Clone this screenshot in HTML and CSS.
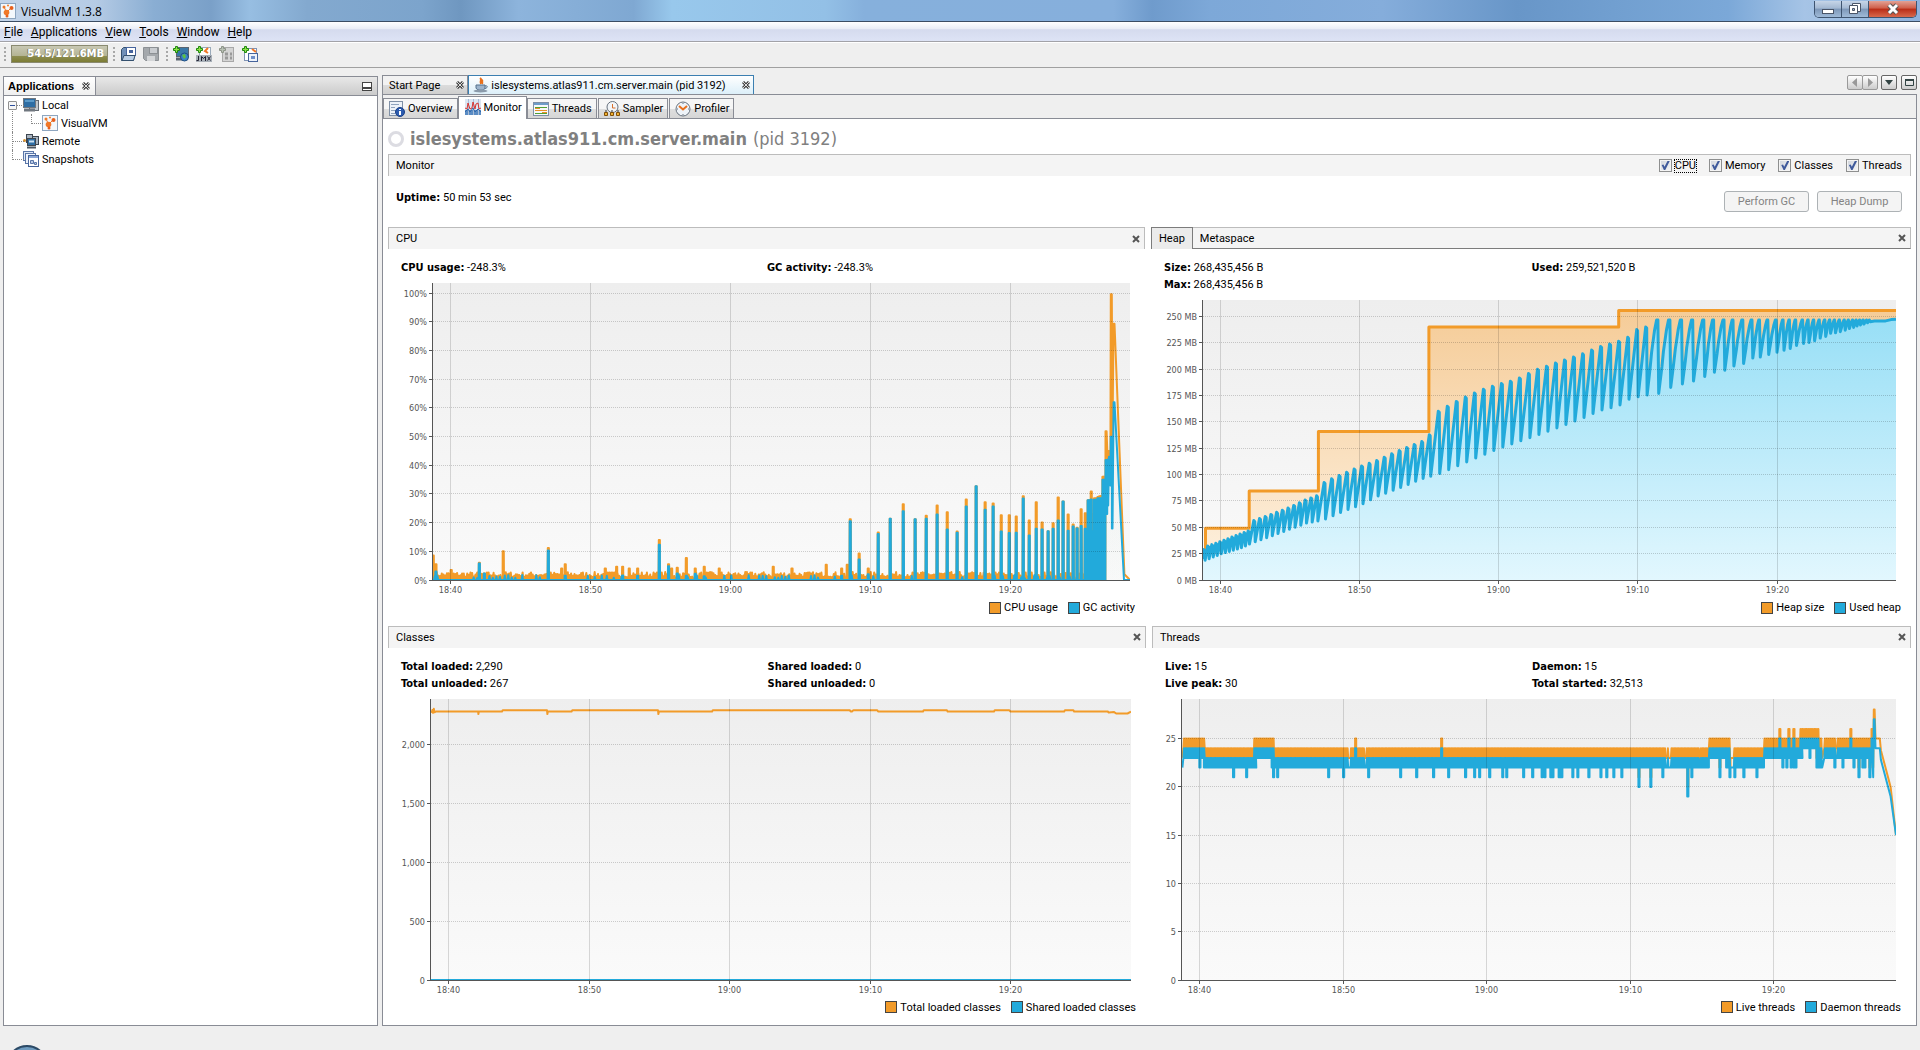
FILE: index.html
```html
<!DOCTYPE html>
<html lang="en">
<head>
    <meta charset="UTF-8">
    <meta name="viewport" content="width=device-width, initial-scale=1.0">
    <title>VisualVM 1.3.8</title>
    <link rel="stylesheet" href="styles.css">
</head>
<body>
<!-- shared icon shapes -->
<svg class="defs" width="0" height="0" aria-hidden="true">
    <symbol id="i-vm" viewBox="0 0 16 16">
        <rect x=".5" y=".5" width="15" height="15" fill="#f4f8fc" stroke="#8ea6c0"/>
        <path d="M4 4l2 4M7 9l4-4" stroke="#f07828"/>
        <circle cx="4" cy="4" r="1.500" fill="#f07828"/><circle cx="8" cy="2.500" r="1" fill="#f07828"/>
        <circle cx="11.500" cy="5" r="2" fill="#e8601c"/><circle cx="6.500" cy="9.500" r="2.800" fill="#f07828"/>
        <circle cx="7" cy="13" r="1.500" fill="#e8601c"/>
    </symbol>
    <symbol id="i-plus" viewBox="0 0 16 16">
        <path d="M2.500.500h2v2h2v2h-2v2h-2v-2h-2v-2h2z" fill="#8fe04a" stroke="#1f8a0c"/>
    </symbol>
    <symbol id="i-shot" viewBox="0 0 16 16">
        <rect x=".5" y=".5" width="10" height="9" fill="#dfe8f6" stroke="#5a76a8"/>
        <rect x="2.500" y="2.500" width="10" height="10" fill="#eef3fb" stroke="#5a76a8"/>
        <rect x="5.500" y="4.500" width="10" height="11" fill="#fff" stroke="#46649c"/>
        <path d="M6 6h9" stroke="#8ba6d6" stroke-width="2"/>
        <path d="M7.500 9.500h3v3h-3zM11.500 11.500h2v2h-2z" fill="#b8c8e4" stroke="#5a76a8"/>
    </symbol>
    <symbol id="i-x" viewBox="0 0 8 8"><path d="M1 1l6 6M7 1L1 7" stroke="#555" stroke-width="2"/></symbol>
    <symbol id="i-tabx" viewBox="0 0 8 8">
        <path d="M1 1l6 6M7 1L1 7" stroke="#444" stroke-width="3"/>
        <path d="M1 1l6 6M7 1L1 7" stroke="#ddd"/>
    </symbol>
</svg>

<div class="window">
    <header class="titlebar">
        <svg class="icon"><use href="#i-vm"/></svg>
        <span class="titlebar-text">VisualVM 1.3.8</span>
        <div class="window-buttons">
            <button aria-label="Minimize"><svg width="12" height="16"><rect x=".5" y="8.500" width="11" height="4" fill="#fff" stroke="#4a5568"/></svg></button>
            <button aria-label="Restore"><svg width="12" height="16"><path d="M3.500 2.500h8v8h-8z" fill="#fff" stroke="#4a5568"/><path d="M.5 4.500h8v8h-8z" fill="#fff" stroke="#4a5568"/><path d="M3.500 7.500h2v2h-2z" fill="#9fb4cf" stroke="#4a5568"/></svg></button>
            <button class="window-close" aria-label="Close"><svg width="12" height="16"><path d="M2 4l8 8M10 4l-8 8" stroke="#555" stroke-width="5"/><path d="M2 4l8 8M10 4l-8 8" stroke="#fff" stroke-width="3"/></svg></button>
        </div>
    </header>

    <nav class="menubar">
        <a href="#"><u>F</u>ile</a>
        <a href="#"><u>A</u>pplications</a>
        <a href="#"><u>V</u>iew</a>
        <a href="#"><u>T</u>ools</a>
        <a href="#"><u>W</u>indow</a>
        <a href="#"><u>H</u>elp</a>
    </nav>

    <div class="toolbar">
        <span class="grip"></span>
        <button class="memory">54.5/121.6MB</button>
        <span class="grip"></span>
        <button aria-label="Open file"><svg class="icon">
            <path d="M1.500 14.500v-11l2-2h4l1 2v5h6l-1 6z" fill="#6f8fb8" stroke="#34506e"/>
            <rect x="6.500" y="1.500" width="9" height="8" fill="#fff" stroke="#46649c"/><path d="M9 5.500h4" stroke="#46649c" stroke-width="3"/>
            <path d="M2 14.500l2-5h11l-1.500 5z" fill="#b9cde4" stroke="#34506e"/></svg></button>
        <button aria-label="Save" disabled><svg class="icon">
            <path d="M.500 1.500h15v13h-13l-2-2z" fill="#a4a8ac" stroke="#8c9094"/>
            <rect x="6.500" y="1.500" width="8" height="6" fill="#c9ccd0" stroke="#8c9094"/><rect x="4" y="10" width="8" height="5" fill="#d4d6d8"/></svg></button>
        <span class="grip"></span>
        <button aria-label="Add remote host"><svg class="icon">
            <rect x="3.500" y="1.500" width="12" height="9" fill="#3a78a8" stroke="#5a6470"/><path d="M3 13h7" stroke="#5a6470" stroke-width="3"/>
            <circle cx="11.500" cy="11" r="4" fill="#3a80c8" stroke="#1f4e80"/><path d="M9 9l3-1 1 3-2 2z" fill="#5cc040"/>
            <use href="#i-plus"/></svg></button>
        <button aria-label="Add JMX connection"><svg class="icon">
            <rect x="3.500" y="1.500" width="11" height="13" fill="#fff" stroke="#9ab"/>
            <path d="M12 2l-3 3 3 2" fill="none" stroke="#f07828" stroke-width="2"/>
            <rect y="9" width="16" height="7" fill="#a8b0b8"/><path d="M2.500 10v4.500h-2M5.500 15v-4.500l2 2 2-2V15M11.500 10.500l3 4M14.500 10.500l-3 4" fill="none" stroke="#223"/>
            <use href="#i-plus"/></svg></button>
        <button aria-label="Add VM coredump" disabled><svg class="icon">
            <rect x="3.500" y="1.500" width="11" height="14" fill="#d4d4d4" stroke="#a8a8a8"/>
            <path d="M6 8h3M11 8h2M6 12h3M11 12h2" stroke="#999" stroke-width="3"/>
            <path d="M2.500.500h2v2h2v2h-2v2h-2v-2h-2v-2h2z" fill="#b8c0b4" stroke="#8c9488"/></svg></button>
        <button aria-label="Add snapshot"><svg class="icon">
            <rect x="2.500" y="2.500" width="12" height="12" fill="#fff" stroke="#7f92b4"/><path d="M10 3l4 3" stroke="#f07828" stroke-width="2"/>
            <rect x="6.500" y="7.500" width="9" height="8" fill="#eef3fb" stroke="#46649c"/><path d="M9 11.500h4" stroke="#6f8fc8" stroke-width="3"/>
            <use href="#i-plus"/></svg></button>
    </div>

    <div class="workspace">
        <aside class="sidebar">
            <div class="sidebar-head">
                <div class="sidebar-tab">Applications <button aria-label="Close Applications"><svg width="8" height="8"><use href="#i-tabx"/></svg></button></div>
                <button class="minimize" aria-label="Minimize panel"></button>
            </div>
            <ul class="tree">
                <li class="tree-open">
                    <button class="tree-toggle" aria-label="Collapse Local"></button>
                    <span class="tree-row"><svg class="icon"><rect x="6.500" y="3.500" width="9" height="10" fill="#c4c8cc" stroke="#666c74"/><rect x=".5" y="1.500" width="12" height="9" fill="#2f6ea4" stroke="#70777f"/><path d="M2 3h9v2H2z" fill="#5c9ac8"/><path d="M1 13h11" stroke="#70777f" stroke-width="3"/></svg>Local</span>
                    <ul>
                        <li><span class="tree-row"><svg class="icon"><use href="#i-vm"/></svg>VisualVM</span></li>
                    </ul>
                </li>
                <li><span class="tree-row"><svg class="icon"><rect x="3.500" y="1.500" width="6" height="8" fill="#a9b4c0" stroke="#3d4650"/><rect x="9.500" y="3.500" width="6" height="8" fill="#a9b4c0" stroke="#3d4650"/><rect x="4.500" y="5.500" width="8" height="7" fill="#2f6ea4" stroke="#3d4650"/><path d="M6 8.500h5" stroke="#cfe2f2" stroke-width="2"/><path d="M4 14.500h9" stroke="#4d5660" stroke-width="2"/><circle cx="1.500" cy="7.500" r="1.500" fill="#d8902c"/></svg>Remote</span></li>
                <li><span class="tree-row"><svg class="icon"><use href="#i-shot"/></svg>Snapshots</span></li>
            </ul>
        </aside>

        <main class="editor">
            <div class="doc-tabs">
                <div class="doc-tab"><span>Start Page</span><button aria-label="Close Start Page"><svg width="8" height="8"><use href="#i-tabx"/></svg></button></div>
                <div class="doc-tab active"><svg class="icon"><path d="M7 1c3 2-1 3 1 6M10 3c-2 1 0 2-1 4" fill="none" stroke="#e8701c" stroke-width="2"/><path d="M3 8h9v3c0 3-8 3-9 0z" fill="#9db4cc" stroke="#54708c"/><path d="M12 9c3-1 3 2 0 2.500" fill="none" stroke="#54708c"/><ellipse cx="7.500" cy="14" rx="7" ry="1.500" fill="#8a9aaa"/></svg><span>islesystems.atlas911.cm.server.main (pid 3192)</span><button aria-label="Close islesystems"><svg width="8" height="8"><use href="#i-tabx"/></svg></button></div>
                <div class="doc-nav">
                    <div class="doc-pair">
                        <button aria-label="Previous" disabled><svg width="8" height="9"><path d="M6 0v9L1 4.500z" fill="#999"/></svg></button>
                        <button aria-label="Next" disabled><svg width="8" height="9"><path d="M2 0v9l5-4.500z" fill="#999"/></svg></button>
                    </div>
                    <button aria-label="Show opened documents"><svg width="8" height="5"><path d="M0 0h8L4 5z" fill="#344"/></svg></button>
                    <button aria-label="Maximize"><svg width="9" height="7"><path d="M.5 1h8v5.500h-8z" fill="none" stroke="#344"/><path d="M0 1h9" stroke="#344" stroke-width="2"/></svg></button>
                </div>
            </div>

            <div class="view">
                <div class="view-tabs">
                    <button><svg class="icon"><rect x=".5" y=".5" width="13" height="14" fill="#edf2f8" stroke="#7f90a6"/><path d="M2 3.500h8M2 6.500h4M2 9.500h5M2 12.500h4" stroke="#8fa3bd"/><circle cx="11" cy="11" r="4.500" fill="#2c5cb0" stroke="#1b3f84"/><path d="M11 8v1M11 10v4" stroke="#fff" stroke-width="2"/></svg>Overview</button>
                    <button class="active"><svg class="icon"><rect width="16" height="16" fill="#dce6f2"/><rect y="11" width="16" height="5" fill="#5a8cc4"/><path d="M3.500 0v16M8.500 0v16M13.500 0v16" stroke="#a9bdd6"/><path d="M0 9l2 1 1-6 2 6 2-1 1-6 2 7 1-5 2-1 1 6 2-1" fill="none" stroke="#d83430"/><path d="M0 13l3-3 2 3 3-4 2 4 3-3 3 3" fill="none" stroke="#2f68ac"/></svg>Monitor</button>
                    <button><svg class="icon"><rect x=".5" y="1.500" width="15" height="13" fill="#f6f8fa" stroke="#7f90a6"/><path d="M1 3h14" stroke="#6e9cc8" stroke-width="2"/><path d="M2 6.500h12M2 12.500h12" stroke="#52a034"/><path d="M2 9.500h12" stroke="#e89028"/><path d="M2 7.500h5M9 11.500h5" stroke="#e89028"/></svg>Threads</button>
                    <button><svg class="icon"><circle cx="8.500" cy="6" r="5.500" fill="#f2f5f8" stroke="#68727e"/><path d="M8.500 3v4h3" fill="none" stroke="#d8702c"/><path d="M2 9v2M8 9v2M14 9v2" stroke="#333"/><path d="M.5 11.500h3v3h-3zM6.500 11.500h3v3h-3zM12.500 11.500h3v3h-3z" fill="#f0b030" stroke="#805008"/></svg>Sampler</button>
                    <button><svg class="icon"><circle cx="8" cy="8" r="7" fill="#eef3f8" stroke="#68727e"/><path d="M4 5l4 3.500L12 5" fill="none" stroke="#e8701c" stroke-width="2"/><path d="M8 2v1M8 13v1M2 8h1M13 8h1" stroke="#68727e"/></svg>Profiler</button>
                </div>

                <div class="view-body">
                    <h1 class="heading"><svg class="icon"><circle cx="8" cy="8" r="6.500" fill="#fff" stroke="#dcdce2" stroke-width="3"/></svg><b>islesystems.atlas911.cm.server.main</b> (pid 3192)</h1>

                    <div class="bar">
                        <span class="bar-title">Monitor</span>
                        <div class="bar-checks">
                            <label><input type="checkbox" checked><span class="focused">CPU</span></label>
                            <label><input type="checkbox" checked><span>Memory</span></label>
                            <label><input type="checkbox" checked><span>Classes</span></label>
                            <label><input type="checkbox" checked><span>Threads</span></label>
                        </div>
                    </div>

                    <div class="uptime">
                        <span><b>Uptime:</b> 50 min 53 sec</span>
                        <div class="uptime-buttons">
                            <button disabled>Perform GC</button>
                            <button disabled>Heap Dump</button>
                        </div>
                    </div>

                    <div class="charts charts-top">
                        <section class="panel">
                            <div class="bar"><span class="bar-title">CPU</span><button class="bar-close" aria-label="Hide CPU"><svg width="8" height="8"><use href="#i-x"/></svg></button></div>
                            <div class="stats">
                                <span><b>CPU usage:</b> -248.3%</span><span><b>GC activity:</b> -248.3%</span>
                            </div>
                            <div class="plot" id="cpu"></div>
                            <div class="legend"><span class="key orange">CPU usage</span><span class="key blue">GC activity</span></div>
                        </section>
                        <section class="panel">
                            <div class="bar bar-tabs"><button class="active">Heap</button><button>Metaspace</button><button class="bar-close" aria-label="Hide Heap"><svg width="8" height="8"><use href="#i-x"/></svg></button></div>
                            <div class="stats">
                                <span><b>Size:</b> 268,435,456 B</span><span><b>Used:</b> 259,521,520 B</span>
                                <span><b>Max:</b> 268,435,456 B</span>
                            </div>
                            <div class="plot" id="heap"></div>
                            <div class="legend"><span class="key orange">Heap size</span><span class="key blue">Used heap</span></div>
                        </section>
                    </div>

                    <div class="charts charts-bottom">
                        <section class="panel">
                            <div class="bar"><span class="bar-title">Classes</span><button class="bar-close" aria-label="Hide Classes"><svg width="8" height="8"><use href="#i-x"/></svg></button></div>
                            <div class="stats">
                                <span><b>Total loaded:</b> 2,290</span><span><b>Shared loaded:</b> 0</span>
                                <span><b>Total unloaded:</b> 267</span><span><b>Shared unloaded:</b> 0</span>
                            </div>
                            <div class="plot" id="classes"></div>
                            <div class="legend"><span class="key orange">Total loaded classes</span><span class="key blue">Shared loaded classes</span></div>
                        </section>
                        <section class="panel">
                            <div class="bar"><span class="bar-title">Threads</span><button class="bar-close" aria-label="Hide Threads"><svg width="8" height="8"><use href="#i-x"/></svg></button></div>
                            <div class="stats">
                                <span><b>Live:</b> 15</span><span><b>Daemon:</b> 15</span>
                                <span><b>Live peak:</b> 30</span><span><b>Total started:</b> 32,513</span>
                            </div>
                            <div class="plot" id="threads"></div>
                            <div class="legend"><span class="key orange">Live threads</span><span class="key blue">Daemon threads</span></div>
                        </section>
                    </div>
                </div>
            </div>
        </main>
    </div>

    <footer class="statusbar">
        <svg width="54" height="24"><circle cx="27" cy="40" r="20" fill="#6f9cc0" stroke="#2c4a66" stroke-width="2"/></svg>
    </footer>
</div>

<script src="charts.js"></script>
</body>
</html>
```
FILE: styles.css
```css
* {
    box-sizing: border-box;
}

body {
    margin: 0;
    background-color: #efefef;
    color: #000;
    font-family: Roboto, Tahoma, sans-serif;
    font-size: 11px;
    line-height: 17px;
}

b {
    font-family: "DejaVu Sans Condensed", Tahoma, sans-serif;
}

button {
    margin: 0;
    padding: 0;
    border: none;
    background: none;
    color: inherit;
    font: inherit;
}

svg {
    display: block;
}

.defs {
    position: absolute;
}

.icon {
    width: 16px;
    height: 16px;
    flex: none;
}

.window {
    display: flex;
    flex-direction: column;
    height: 100vh;
    min-height: 800px;
    overflow: hidden;
}

/* title bar */
.titlebar {
    display: flex;
    align-items: center;
    height: 22px;
    padding-top: 1px;
    border-bottom: 1px solid #3b4d63;
    background: linear-gradient(90deg, #c3d4e9 0, #b5cbe5 5%, #8aaed3 8%, #7aa0c8 11%, #97bee2 13%, #83a9cf 16%, #7ca4cc 22%, #6f97c0 24%, #8db4dc 27%, #7fa8d2 33%, #98c8ec 35%, #93c0e6 43%, #86b0dc 45%, #86afdc 58%, #6f9bcc 60%, #7da8d8 63%, #85addb 72%, #6896c8 79%, #719fd0 84%, #7ba8d8 90%, #a6c4e6 94%, #8fb2dc 100%);
    font-family: "Open Sans", sans-serif;
    font-size: 12px;
}

.titlebar-text {
    margin-left: 5px;
}

.window-buttons {
    display: flex;
    align-self: flex-start;
    height: 17px;
    margin-left: auto;
    margin-right: 3px;
    border: 1px solid #3e5470;
    border-top: none;
    border-radius: 0 0 5px 5px;
    overflow: hidden;
}

.window-buttons button {
    display: flex;
    justify-content: center;
    width: 27px;
    border-right: 1px solid #3e5470;
    background: linear-gradient(#c6d5e8, #a3b8d2 45%, #7d97b8 50%, #9fbad8);
}

.window-buttons .window-close {
    width: 47px;
    border-right: none;
    background: linear-gradient(#e2a295, #cf5d48 45%, #b92c16 50%, #d8694c);
}

/* menu */
.menubar {
    display: flex;
    align-items: center;
    gap: 8px;
    height: 20px;
    padding: 1px 0 0 4px;
    border-bottom: 1px solid #a2a2a8;
    background: linear-gradient(#fff, #e8ecf6 38%, #d5dbee 40%, #dde3f5);
    font-size: 12px;
}

.menubar a {
    color: #000;
    text-decoration: none;
}

/* toolbar */
.toolbar {
    display: flex;
    align-items: center;
    gap: 7px;
    height: 26px;
    padding: 0 0 2px 4px;
    border-top: 1px solid #fff;
    border-bottom: 1px solid #a0a0a0;
}

.grip {
    width: 2px;
    height: 15px;
    margin-right: -2px;
    background: repeating-linear-gradient(#a8a8a8 0 2px, transparent 2px 4px);
}

.memory {
    width: 97px;
    height: 18px;
    margin-right: -2px;
    padding-right: 3px;
    border: 1px solid #8a8a70;
    background: linear-gradient(#c8c8b4, #b4b494 60%, #8c8c50 64%, #7c7c34);
    color: #fff;
    font-family: "DejaVu Sans Condensed", Tahoma, sans-serif;
    font-weight: bold;
    line-height: 14px;
    text-align: right;
    text-shadow: -1px 0 #7c7c60;
}

/* workspace */
.workspace {
    display: flex;
    flex: 1;
    min-height: 0;
    gap: 4px;
    padding: 7px 3px 0;
}

.sidebar {
    display: flex;
    flex-direction: column;
    flex: none;
    width: 375px;
    margin-top: 1px;
    border: 1px solid #898c95;
    background-color: #fff;
}

.sidebar-head {
    display: flex;
    align-items: center;
    height: 19px;
    padding-right: 5px;
    border-bottom: 1px solid #898c95;
    background: linear-gradient(#e8e8e8, #cbcbcb);
}

.sidebar-tab {
    display: flex;
    align-items: center;
    justify-content: space-between;
    width: 92px;
    height: 18px;
    padding: 0 5px 0 4px;
    border-right: 1px solid #898c95;
    background: linear-gradient(#fff, #efefef);
    font-family: "Liberation Sans", Arial, sans-serif;
    font-weight: bold;
}

.minimize {
    width: 10px;
    height: 9px;
    margin-left: auto;
    border: 1px solid #444;
    background: linear-gradient(#fff 4px, #444 4px 6px, #fff 6px);
}

.tree,
.tree ul {
    margin: 0;
    padding: 0;
    list-style: none;
}

.tree {
    padding-left: 8px;
}

.tree li {
    position: relative;
    padding-left: 11px;
}

.tree ul li {
    padding-left: 19px;
}

/* dotted connectors */
.tree li::before {
    content: "";
    position: absolute;
    left: 0;
    top: 0;
    width: 11px;
    height: 9px;
    border-left: 1px dotted #888;
    border-bottom: 1px dotted #888;
}

.tree > li:not(:last-child)::after {
    content: "";
    position: absolute;
    left: 0;
    top: 9px;
    bottom: 0;
    border-left: 1px dotted #888;
}

.tree ul li::before {
    left: 8px;
    width: 11px;
}

.tree > .tree-open:first-child::before {
    border-left-color: transparent;
}

.tree-row {
    display: flex;
    align-items: center;
    gap: 3px;
    height: 18px;
}

.tree-toggle {
    position: absolute;
    z-index: 1;
    left: -4px;
    top: 5px;
    width: 9px;
    height: 9px;
    border: 1px solid #919191;
    border-radius: 1px;
    background: linear-gradient(#2c4e9c, #2c4e9c) center / 5px 1px no-repeat #f6f6f6;
}

/* document tabs */
.editor {
    display: flex;
    flex-direction: column;
    flex: 1;
    min-width: 0;
}

.doc-tabs {
    display: flex;
    height: 19px;
    align-items: stretch;
}

.doc-tab {
    display: flex;
    align-items: center;
    gap: 2px;
    padding: 0 3px 0 6px;
    border: 1px solid #898c95;
    border-bottom: none;
    background: linear-gradient(#f2f2f2 50%, #dcdcdc 50%, #cfcfcf);
}

.doc-tab button {
    margin-left: 14px;
}

.doc-tab.active {
    padding-left: 4px;
    border-color: #3c7fb1;
    background: linear-gradient(#fff, #dceff9);
}

.doc-nav {
    display: flex;
    gap: 4px;
    height: 15px;
    margin-left: auto;
}

.doc-nav button {
    display: flex;
    align-items: center;
    justify-content: center;
    width: 16px;
    height: 15px;
    border: 1px solid #666;
    border-radius: 2px;
    background: linear-gradient(#fff, #e6e6e6 50%, #ccc);
}

.doc-pair {
    display: flex;
}

.doc-pair button {
    margin-right: -1px;
    border-color: #999;
}

/* view */
.view {
    display: flex;
    flex-direction: column;
    flex: 1;
    min-height: 0;
    border: 1px solid #898c95;
    background-color: #fff;
}

.view-tabs {
    display: flex;
    align-items: flex-end;
    height: 24px;
    background: linear-gradient(#898c95, #898c95) bottom / 100% 1px no-repeat #efefef;
}

.view-tabs button {
    display: flex;
    align-items: center;
    gap: 3px;
    height: 21px;
    margin-right: 1px;
    padding: 0 4px 0 5px;
    border: 1px solid #898c95;
    background: linear-gradient(#f6f6f6 50%, #dfdfdf 50%, #d6d6d6);
}

.view-tabs button.active {
    align-items: flex-start;
    height: 23px;
    margin-left: -1px;
    margin-right: 0;
    padding: 2px 4px 0 6px;
    border-bottom: none;
    background: #fff;
}

.view-body {
    display: flex;
    flex-direction: column;
    flex: 1;
    min-height: 0;
    padding: 0 5px;
}

.heading {
    display: flex;
    align-items: center;
    gap: 6px;
    height: 35px;
    margin: 0;
    padding-top: 4px;
    color: #808080;
    font-family: "DejaVu Sans Condensed", Tahoma, sans-serif;
    font-size: 18px;
    font-weight: normal;
}

.bar {
    display: flex;
    align-items: center;
    flex: none;
    height: 22px;
    padding: 0 4px 0 7px;
    border: 1px solid #bcbcbc;
    border-bottom: none;
    background-color: #f4f4f4;
}

.bar-close {
    margin-left: auto;
}

.bar-checks {
    display: flex;
    gap: 13px;
    margin-left: auto;
    padding-right: 4px;
}

.bar-checks label {
    display: flex;
    align-items: center;
    gap: 3px;
}

.bar-checks .focused {
    outline: 1px dotted #000;
    line-height: 12px;
}

.bar-checks input {
    appearance: none;
    width: 13px;
    height: 13px;
    margin: 0;
    border: 1px solid #8e8f8f;
    background: linear-gradient(135deg, #cfd4dc, #f6f6f6);
    box-shadow: inset 0 0 0 1px #f4f4f4;
}

.bar-checks input:checked::before {
    content: "";
    display: block;
    width: 9px;
    height: 9px;
    margin: 1px;
    background-color: #3f5a9c;
    clip-path: polygon(10% 45%, 30% 40%, 42% 65%, 75% 0, 100% 0, 50% 100%, 35% 100%);
}

.bar-tabs {
    padding-left: 0;
    border-left: none;
    border-bottom: 1px solid #7c7c7c;
}

.bar-tabs button {
    height: 20px;
    padding: 0 7px;
}

.bar-tabs .bar-close {
    height: auto;
    padding: 0;
}

.bar-tabs .active {
    height: 22px;
    border: 1px solid #7c7c7c;
    border-bottom: none;
    background-color: #ebebeb;
}

.uptime {
    display: flex;
    justify-content: space-between;
    flex: none;
    height: 51px;
    padding: 13px 9px 0 8px;
}

.uptime-buttons {
    display: flex;
    gap: 8px;
    padding-top: 2px;
}

.uptime-buttons button {
    width: 85px;
    height: 21px;
    border: 1px solid #adb2b5;
    border-radius: 3px;
    background-color: #f4f4f4;
    color: #838383;
}

/* charts */
.charts {
    display: grid;
    min-height: 0;
    gap: 6px;
    margin-bottom: 6px;
}

.charts-top {
    flex: 393 1 0;
    grid-template-columns: 757fr 760fr;
}

.charts-bottom {
    flex: 394 1 0;
    grid-template-columns: 758fr 759fr;
}

.panel {
    display: flex;
    flex-direction: column;
    min-width: 0;
    min-height: 0;
}

.stats {
    display: grid;
    grid-template-columns: 1fr 1fr;
    flex: none;
    padding: 10px 12px 7px 13px;
}

.plot {
    flex: 1;
    min-height: 0;
    overflow: hidden;
}

.plot text {
    fill: #555;
    font-family: "DejaVu Sans Condensed", Tahoma, sans-serif;
    font-size: 9px;
}

.legend {
    display: flex;
    align-items: center;
    justify-content: flex-end;
    gap: 10px;
    flex: none;
    height: 22px;
    padding: 0 10px 2px 0;
}

.key {
    display: flex;
    align-items: center;
    gap: 3px;
}

.key::before {
    content: "";
    width: 10px;
    height: 10px;
    border: 1px solid #444;
}

.key.orange::before {
    background-color: #f29b29;
}

.key.blue::before {
    background-color: #22aadb;
}

.statusbar {
    flex: none;
    height: 24px;
}
```
FILE: charts.js
```js
// Time is in minutes relative to 18:40
var T_START = -1.25;
var T_END = 48.55;
var ORANGE = "#f29b29";
var BLUE = "#22aadb";

// small repeatable noise generator
var seed = 7;
function noise() {
    seed = (seed * 16807) % 2147483647;
    return seed / 2147483647;
}

// ---- CPU: [time, cpu %, gc %]
var cpuSpikes = [
    [-1.23, 8.5, 0], [-1.04, 5.5, 3], [0.05, 3.5, 0], [2.06, 6, 5.8], [2.42, 2.3, 2.3], [3.77, 10, 0],
    [6.99, 11.2, 10.3], [7.94, 4, 0], [8.2, 5.5, 1.5], [11.06, 4, 0], [11.87, 4.6, 0], [12.3, 4.6, 1.6],
    [12.77, 4, 0], [13.37, 4, 1.5], [14.92, 14, 12.3], [15.58, 5.5, 4.8], [15.8, 4, 0], [16.2, 4.3, 2.3],
    [16.85, 7.7, 1.5], [17.49, 4, 2.2], [18.13, 4.6, 1.3], [19.2, 4, 0], [23.06, 4.6, 0], [24.4, 4, 0],
    [26.85, 5.3, 0], [27.95, 4, 1.5], [28.35, 5.3, 0],
    [28.56, 21.2, 20.5], [29.2, 9.2, 7.1], [29.85, 4, 2], [30.56, 16.6, 16], [31.42, 21.4, 21.4],
    [32.35, 26.4, 24], [33.2, 21.2, 21.2], [33.99, 22.4, 21.4], [34.77, 26, 22.8], [35.49, 23.6, 17.6],
    [36.2, 16.9, 16.5], [36.85, 28.1, 25.6], [37.56, 32.7, 32.7], [38.2, 27.1, 24.5], [38.77, 26.7, 25.6],
    [39.35, 22.6, 16.9], [39.92, 22.6, 16.4], [40.42, 22.1, 16.5], [40.92, 29.2, 28.4], [41.35, 20.8, 15.5],
    [41.85, 27.1, 17.9], [42.27, 20.1, 17.6], [42.7, 17, 17], [43.06, 19.8, 17.9], [43.42, 28.8, 20.8],
    [43.77, 27.4, 27.4], [44.13, 22.9, 17.2], [44.49, 19.4, 18.7], [44.77, 18.2, 18], [45.06, 24.7, 18.8],
    [45.35, 23.3, 17.9], [45.56, 27.8, 27.8], [45.66, 27.8, 27.8], [45.78, 30.9, 28.1], [45.9, 23, 17],
    [46.02, 28.5, 28], [46.14, 28.5, 28], [46.26, 29, 28.5], [46.38, 29.2, 28.5], [46.5, 29.3, 28.5],
    [46.62, 36, 35], [46.72, 36, 35], [46.84, 51.9, 41.9]
];

function cpuSeries(column) {
    var points = [];
    var t = T_START;
    cpuSpikes.forEach(function (spike) {
        // idle load between two spikes
        while (t < spike[0] - 0.1) {
            if (column === 1) {
                points.push([t, 1 + noise() * 1.8], [t + 0.05, 0.3]);
                t += 0.12;
            } else {
                points.push([t, 0]);
                if (noise() > 0.7) {
                    points.push([t + 0.05, 0.6 + noise() * 1.2], [t + 0.1, 0]);
                }
                t += 0.25;
            }
        }
        var v = spike[column];
        points.push([spike[0] - 0.05, 0], [spike[0] - 0.04, v], [spike[0] + 0.04, v], [spike[0] + 0.05, 0]);
        t = spike[0] + 0.06;
    });
    points.pop();
    return points.concat(column === 1
        ? [[46.95, 42], [47.05, 45], [47.15, 40], [47.18, 99.7], [47.25, 99.7], [47.3, 50], [47.37, 89.4], [47.44, 89.4], [48.15, 2], [48.55, 0]]
        : [[46.92, 23], [46.95, 42], [46.99, 26], [47.05, 43], [47.14, 33], [47.18, 50], [47.26, 50], [47.26, 18], [47.3, 18], [47.38, 62], [47.44, 62], [48.12, 0], [48.6, 0]]);
}

// ---- Heap: [time, low, peak] envelope up to the last resize
var heapEnvelope = [
    [-1.25, 18, 27], [-0.85, 20, 32], [0, 24.6, 36], [1.4, 30, 43], [2.2, 34.7, 47], [2.43, 36, 56], [3.68, 41.7, 62],
    [4.93, 48, 68], [6.2, 54, 76], [7.04, 56, 80], [7.57, 58, 93], [8.62, 64, 99], [10.2, 72, 108],
    [11.2, 79, 112.5], [12.8, 87, 122], [14.47, 96, 131], [15, 98, 133], [15.6, 100, 159], [16.9, 107.5, 168.5],
    [18.76, 118, 180], [20.06, 125, 185.5], [21.35, 131, 190], [22.7, 137, 199], [24.66, 146.6, 208],
    [26.03, 153.6, 214], [27.3, 161, 221], [28.6, 165, 226], [29.27, 171, 229], [29.9, 173.5, 237], [30.6, 175.4, 240]
];
var heapTail = [
    [31.5, 177], [32.36, 182.7], [33.2, 186], [34, 188.7], [34.8, 193], [35.5, 197], [36.25, 199], [36.9, 203],
    [37.6, 205.4], [38.26, 210.5], [38.8, 211.4], [39.4, 214], [40, 216], [40.5, 218], [40.95, 219.7], [41.4, 222.5],
    [41.9, 224.4], [42.3, 225.3], [42.7, 227], [43.1, 229.5], [43.5, 231], [43.85, 234], [44.2, 234.5], [44.55, 235.5],
    [44.9, 237], [45.2, 238.6], [45.5, 239.6], [45.75, 241], [46, 242], [46.25, 242.7], [46.5, 244], [46.7, 245]
];

function envelopeAt(t) {
    for (var i = 1; i < heapEnvelope.length; i++) {
        var a = heapEnvelope[i - 1], b = heapEnvelope[i];
        if (t <= b[0]) {
            var k = (t - a[0]) / (b[0] - a[0]);
            return [a[1] + (b[1] - a[1]) * k, a[2] + (b[2] - a[2]) * k];
        }
    }
    return [175.4, 240];
}

function usedHeap() {
    var points = [[T_START, 20]];
    var t = -1.1;
    while (t < 30.7) {
        var e = envelopeAt(t);
        points.push([t - 0.1, e[1]], [t - 0.03, e[1] - 1], [t, e[0]]);
        t += t < 2 ? 0.29 : t < 7 ? 0.41 : t < 15 ? 0.54 : 0.648;
    }
    var last = points[points.length - 1];
    heapTail.forEach(function (tooth) {
        var w = tooth[0] - 0.06 - last[0], h = 246.5 - last[1];
        [[0.28, 0.36], [0.42, 0.57], [0.69, 0.86], [0.88, 1], [1, 1]].forEach(function (k) {
            points.push([last[0] + w * k[0], last[1] + h * k[1]]);
        });
        points.push(tooth);
        last = tooth;
    });
    points.push([47, 245.6], [47.8, 245.8], [48.2, 247], [T_END, 247.4]);
    return points;
}

var heapSize = [
    [T_START, 28], [-1.07, 28], [-1.07, 49], [2.07, 49], [2.07, 84.4], [7.04, 84.4], [7.04, 141],
    [14.98, 141], [14.98, 240], [28.62, 240], [28.62, 255.7], [T_END, 255.7]
];

// ---- Classes
var loadedClasses = [
    [-1.2, 2265], [-1.15, 2290], [-1.1, 2265], [-1.05, 2300], [-1, 2270], [-0.9, 2277], [2.1, 2277], [2.12, 2255],
    [2.15, 2277], [3.8, 2277], [3.85, 2287], [7, 2287], [7.03, 2255], [7.06, 2277], [8.75, 2277], [8.8, 2287],
    [14.9, 2287], [14.93, 2255], [14.96, 2277], [18.75, 2277], [18.8, 2287], [28.55, 2287], [28.6, 2278],
    [28.7, 2278], [28.8, 2287], [30.5, 2287], [30.56, 2277], [33.75, 2277], [33.8, 2287], [35.45, 2287],
    [35.5, 2277], [38.8, 2277], [38.85, 2287], [39.9, 2287], [39.96, 2277], [43.8, 2277], [43.85, 2287],
    [44.45, 2287], [44.5, 2277], [46.9, 2277], [46.96, 2268], [47.35, 2272], [47.5, 2260], [48.3, 2260], [T_END, 2275]
];

// ---- Threads: [from, to, low, high] bands of the daemon count
var threadBands = [
    [-1.15, 0.28, 23, 24], [0.28, 3.75, 22, 23], [3.75, 3.9, 22, 24], [3.9, 5, 23, 24], [5, 5.16, 22, 24],
    [5.16, 10.35, 22, 23], [10.5, 11.47, 22, 23], [11.6, 32.48, 22, 23], [32.6, 32.7, 22, 23], [32.85, 34.76, 22, 23],
    [34.9, 35.5, 22, 23], [35.5, 36.7, 23, 24], [36.7, 37, 22, 24], [37.24, 39.34, 22, 23], [39.34, 41.85, 23, 24],
    [41.85, 42, 23, 25], [42, 43, 24, 25], [43, 43.2, 22, 25], [43.2, 43.4, 22, 24], [43.55, 44.34, 23, 24], [44.45, 46.9, 23, 24]
];
var threadEvents = [
    [0, 22], [2.35, 21], [3.26, 21], [5.14, 21], [5.42, 21], [8.98, 21], [10.02, 21], [10.86, 24], [11.77, 21], [14, 21],
    [15.12, 21], [16.3, 21], [16.86, 24], [17.35, 21], [18.53, 21], [19.16, 21], [19.51, 21], [20.21, 21], [21.12, 21],
    [21.4, 21], [22.58, 21], [23.21, 21], [23.87, 21], [24.06, 21], [24.48, 21], [24.62, 21], [25.06, 21], [25.24, 21],
    [26.01, 21], [26.36, 21], [27.13, 21], [27.97, 21], [28.38, 21], [28.87, 21], [29.43, 21], [30.62, 20], [31.45, 20],
    [32.29, 21], [32.71, 21], [34.03, 19], [34.31, 21], [36.27, 21], [36.97, 21], [37.31, 21], [37.94, 21], [38.85, 21],
    [40.45, 25], [40.66, 22], [40.94, 22], [41.08, 25], [41.24, 22], [41.43, 25], [41.43, 22], [41.57, 22], [42.55, 23],
    [44.29, 22], [44.85, 22], [45.4, 25], [45.62, 22], [45.97, 21], [46.24, 22], [46.38, 22], [46.73, 21], [46.88, 25], [46.92, 21]
];

function daemonThreads() {
    var points = [[-1.22, 22]];
    threadBands.forEach(function (band) {
        var events = threadEvents.filter(function (e) { return e[0] >= band[0] && e[0] < band[1]; });
        for (var t = band[0]; t < band[1]; t += 0.1) {
            points.push([t, band[2]], [t + 0.04, band[3]], [t + 0.08, band[2]]);
            while (events.length && events[0][0] < t + 0.1) {
                var e = events.shift();
                points.push([e[0] - 0.04, band[2]], [e[0] - 0.04, e[1]], [e[0] + 0.04, e[1]], [e[0] + 0.04, band[2]]);
            }
        }
        points.push([band[1], band[2]]);
    });
    return points.concat([[46.96, 21], [47, 27], [47.06, 27], [47.12, 24], [47.42, 24], [47.5, 22.8], [48.17, 19], [T_END, 15]]);
}

var cpuUsage = cpuSeries(1);
var gcActivity = cpuSeries(2);
var heapUsed = usedHeap();
var daemon = daemonThreads();
var live = daemon.map(function (p) {
    return [p[0], p[1] === 15 ? 15 : p[1] + 1];
});

// left: width of the label column, top: value at the upper edge
var charts = [
    { id: "cpu", left: 45, top: 103.6, step: 10, unit: "%", orange: cpuUsage, blue: gcActivity, fill: 0.1, stroke: 2 },
    { id: "heap", left: 52, top: 265.6, step: 25, unit: " MB", orange: heapSize, blue: heapUsed, fill: 1, stroke: 3 },
    { id: "classes", left: 43, top: 2383, step: 500, unit: "", orange: loadedClasses, blue: [[T_START, 0], [T_END, 0]], fill: 0, stroke: 2 },
    { id: "threads", left: 30, top: 29.1, step: 5, unit: "", orange: live, blue: daemon, fill: 0, stroke: 2 }
];

function gradient(id, from, to) {
    return '<linearGradient id="' + id + '" x1="0" y1="0" x2="0" y2="1"><stop offset="0" stop-color="' + from +
        '"/><stop offset="1" stop-color="' + to + '"/></linearGradient>';
}

function drawChart(c) {
    var box = document.getElementById(c.id);
    box.innerHTML = "";
    var w = box.clientWidth, h = box.clientHeight;
    var right = w - 15, bottom = h - 18;

    function x(t) { return c.left + (t - T_START) / (T_END - T_START) * (right - c.left); }
    function y(v) { return bottom * (1 - v / c.top); }
    function crisp(n) { return Math.floor(n) + 0.5; }
    function path(points) {
        return "M" + points.map(function (p) { return x(p[0]).toFixed(1) + " " + y(p[1]).toFixed(1); }).join("L");
    }
    function area(points, paint) {
        return '<path d="' + path(points) + "V" + bottom + "H" + c.left + 'Z" fill="' + paint + '" fill-opacity="' + c.fill + '"/>';
    }
    function line(points, color) {
        return '<path d="' + path(points) + '" fill="none" stroke="' + color + '" stroke-width="' + c.stroke + '" stroke-linejoin="round"/>';
    }

    var s = '<svg width="' + w + '" height="' + h + '"><defs>' +
        gradient(c.id + "-bg", "#eeeeee", "#fafafa") +
        gradient(c.id + "-o", "#f5cc98", "#fef2e2") +
        gradient(c.id + "-b", "#98dff6", "#e2f7fe") +
        '<clipPath id="' + c.id + '-clip"><rect x="' + c.left + '" y="0" width="' + (right - c.left) + '" height="' + bottom + '"/></clipPath></defs>' +
        '<rect x="' + c.left + '" y="0" width="' + (right - c.left) + '" height="' + bottom + '" fill="url(#' + c.id + '-bg)"/>' +
        '<g clip-path="url(#' + c.id + '-clip)">' +
        area(c.orange, "url(#" + c.id + "-o)") + line(c.orange, ORANGE) +
        area(c.blue, "url(#" + c.id + "-b)") + line(c.blue, BLUE) + "</g>";

    for (var v = 0; v < c.top; v += c.step) {
        var gy = crisp(y(v));
        if (v > 0) {
            s += '<path d="M' + c.left + " " + gy + "H" + right + '" stroke="#000" stroke-opacity=".18" stroke-dasharray="1 1"/>';
        }
        s += '<path d="M' + (c.left - 4) + " " + gy + "H" + c.left + '" stroke="#555"/>' +
            '<text x="' + (c.left - 6) + '" y="' + (gy + 3) + '" text-anchor="end">' + v.toLocaleString("en-US") + c.unit + "</text>";
    }
    ["18:40", "18:50", "19:00", "19:10", "19:20"].forEach(function (label, i) {
        var gx = crisp(x(i * 10));
        s += '<path d="M' + gx + " 0V" + bottom + '" stroke="#000" stroke-opacity=".14"/>' +
            '<path d="M' + gx + " " + bottom + 'v4" stroke="#555"/>' +
            '<text x="' + gx + '" y="' + (bottom + 13) + '" text-anchor="middle">' + label + "</text>";
    });
    s += '<path d="M' + (c.left - 0.5) + " 0V" + (bottom + 0.5) + "H" + right + '" fill="none" stroke="#555"/></svg>';
    box.innerHTML = s;
}

function drawAll() {
    charts.forEach(drawChart);
}

drawAll();
window.addEventListener("resize", drawAll);
```
